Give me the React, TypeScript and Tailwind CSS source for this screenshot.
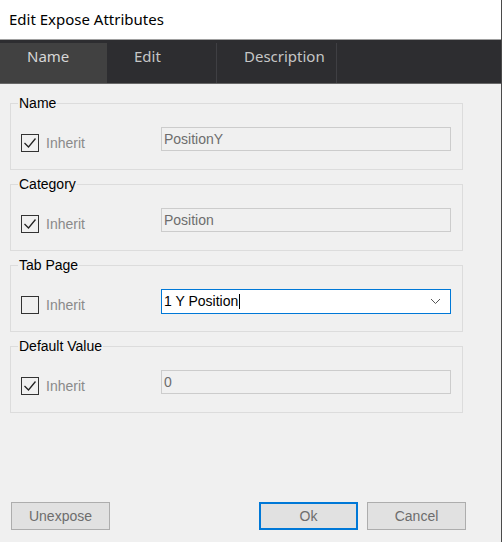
import React from 'react';

const ui = { fontFamily: '"Liberation Sans", Arial, sans-serif' };
const seg = { fontFamily: '"Noto Sans", "Open Sans", sans-serif' };

function Check({ checked }: { checked: boolean }) {
  return (
    <span className="w-[18px] h-[18px] border border-[#333333] bg-[#f0f0f0] flex items-center justify-center">
      {checked && (
        <svg width="14" height="12" viewBox="0 0 14 12" fill="none">
          <polyline points="1.5,6 5.5,10 12.5,1.5" stroke="#222222" strokeWidth="1.3" />
        </svg>
      )}
    </span>
  );
}

function Group({ title, children }: { title: string; children: React.ReactNode }) {
  return (
    <div className="relative w-[453px] h-[67px] border border-[#dcdcdc] mb-[14px]">
      <span className="absolute left-[7px] top-[-9px] px-[1px] bg-[#f0f0f0] text-[14px] leading-4 text-black">
        {title}
      </span>
      <div className="flex items-start pt-[23px]">{children}</div>
    </div>
  );
}

function InheritBox({ checked }: { checked: boolean }) {
  return (
    <div className="w-[150px] pl-[10px] mt-[7px] flex items-center gap-[7px]">
      <Check checked={checked} />
      <span className="text-[14px] leading-4 text-[#8a8a8a]">Inherit</span>
    </div>
  );
}

function ReadOnlyField({ value }: { value: string }) {
  return (
    <div className="w-[290px] h-[24px] border border-[#cccccc] bg-[#f0f0f0] pl-[2px] flex items-center text-[14px] text-[#6d6d6d]">
      {value}
    </div>
  );
}

function Tab({ label, width, active }: { label: string; width: string; active?: boolean }) {
  return (
    <div
      className={
        width +
        ' h-full pl-[27px] pb-[13px] flex items-center text-[15px] ' +
        (active ? 'bg-[#414141] text-[#d6d6d6]' : 'text-[#c6c6c6] border-r border-[#3f3f43]')
      }
      style={seg}
    >
      {label}
    </div>
  );
}

export default function App() {
  return (
    <div className="w-[502px] h-[542px] bg-[#f0f0f0] border-r border-[#4a4a4a] flex flex-col" style={ui}>
      <div className="h-[40px] bg-white border-b border-[#a0a0a0] pl-[9px] flex items-center text-[15px] text-black" style={seg}>
        Edit Expose Attributes
      </div>

      <div className="h-[44px] bg-[#2d2d30] pt-[3px] border-b border-[#686868] flex">
        <Tab label="Name" width="w-[107px]" active />
        <Tab label="Edit" width="w-[110px]" />
        <Tab label="Description" width="w-[120px]" />
      </div>

      <div className="px-[10px] pt-[19px]">
        <Group title="Name">
          <InheritBox checked />
          <ReadOnlyField value="PositionY" />
        </Group>
        <Group title="Category">
          <InheritBox checked />
          <ReadOnlyField value="Position" />
        </Group>
        <Group title="Tab Page">
          <InheritBox checked={false} />
          <div className="w-[290px] h-[25px] border border-[#0078d7] bg-white pl-[2px] pr-[9px] flex items-center text-[14px] text-black">
            <span>1 Y Position</span>
            <span className="w-px h-[15px] bg-black ml-[1px]" />
            <svg className="ml-auto" width="11" height="7" viewBox="0 0 11 7" fill="none">
              <polyline points="1,1 5.5,5.5 10,1" stroke="#555555" strokeWidth="1" />
            </svg>
          </div>
        </Group>
        <Group title="Default Value">
          <InheritBox checked />
          <ReadOnlyField value="0" />
        </Group>
      </div>

      <div className="mt-[75px] pl-[11px] pr-[35px] flex items-start text-[14px] text-[#6d6d6d]">
        <button className="w-[99px] h-[28px] bg-[#e1e1e1] border border-[#adadad]">Unexpose</button>
        <div className="flex-1" />
        <button className="w-[99px] h-[28px] bg-[#e1e1e1] border-2 border-[#0078d7]">Ok</button>
        <button className="w-[99px] h-[28px] ml-[9px] bg-[#e1e1e1] border border-[#adadad]">Cancel</button>
      </div>
    </div>
  );
}
